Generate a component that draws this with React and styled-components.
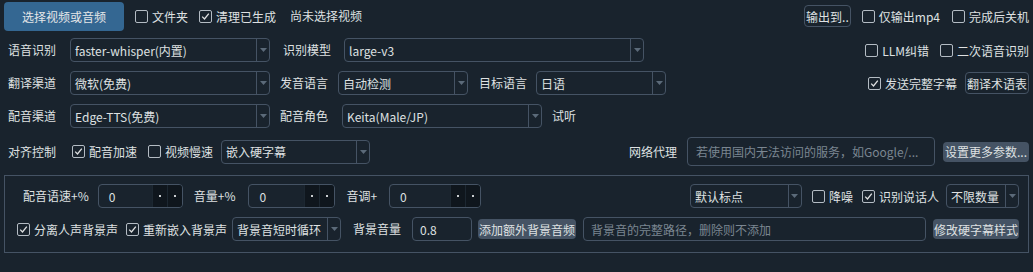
import React from 'react';
import styled, { createGlobalStyle } from 'styled-components';

const GlobalStyle = createGlobalStyle`
  html, body {
    margin: 0;
    padding: 0;
    background: #19232d;
  }
  body {
    font-family: "Noto Sans CJK SC", "Noto Sans", sans-serif;
    font-size: 12px;
    color: #dfe1e2;
  }
`;

const Page = styled.div`
  width: 1033px;
  height: 272px;
  box-sizing: border-box;
  padding: 1px 4px 0 4px;
  background: #19232d;
`;

const Row = styled.div`
  display: flex;
  align-items: center;
  height: ${({ $h }) => $h || 24}px;
  margin-top: ${({ $mt }) => $mt || 0}px;
`;

const Spacer = styled.div`
  flex: 1;
`;

const Label = styled.span`
  white-space: nowrap;
  line-height: 16px;
  margin-left: ${({ $ml }) => $ml || 0}px;
  width: ${({ $w }) => ($w ? `${$w}px` : 'auto')};
  flex-shrink: 0;
`;

const PrimaryButton = styled.button`
  width: 120px;
  height: 29px;
  border: none;
  border-radius: 4px;
  background: #346792;
  color: #e4e6e8;
  font: inherit;
  font-size: 12px;
  padding: 0;
`;

const OutlineButton = styled.button`
  height: 22px;
  padding: 0 1px;
  border: 1px solid #455364;
  border-radius: 4px;
  background: transparent;
  color: #dfe1e2;
  font: inherit;
  white-space: nowrap;
  margin-left: ${({ $ml }) => $ml || 0}px;
`;

const FillButton = styled.button`
  height: 20px;
  padding: 0 ${({ $px }) => ($px === undefined ? 2 : $px)}px;
  border: none;
  border-radius: 4px;
  background: #455364;
  color: #dfe1e2;
  font: inherit;
  white-space: nowrap;
  margin-left: ${({ $ml }) => $ml || 0}px;
  flex-shrink: 0;
`;

const CheckWrap = styled.label`
  display: flex;
  align-items: center;
  gap: 4px;
  white-space: nowrap;
  margin-left: ${({ $ml }) => $ml || 0}px;
  flex-shrink: 0;
`;

const Box = styled.span`
  width: 11px;
  height: 11px;
  border: 1px solid #b4bcc4;
  border-radius: 2px;
  display: flex;
  align-items: center;
  justify-content: center;
`;

const Check = ({ checked, children, ml }) => (
  <CheckWrap $ml={ml}>
    <Box>
      {checked && (
        <svg width="9" height="9" viewBox="0 0 9 9">
          <path d="M1.2 4.6 L3.5 7 L7.8 1.6" fill="none" stroke="#dfe1e2" strokeWidth="1.3" />
        </svg>
      )}
    </Box>
    {children}
  </CheckWrap>
);

const ComboBox = styled.div`
  width: ${({ $w }) => $w}px;
  height: 24px;
  box-sizing: border-box;
  border: 1px solid #455364;
  border-radius: 4px;
  display: flex;
  align-items: stretch;
  margin-left: ${({ $ml }) => $ml || 0}px;
  flex-shrink: 0;
`;

const ComboText = styled.div`
  flex: 1;
  padding-left: 4px;
  display: flex;
  align-items: center;
  white-space: nowrap;
  overflow: hidden;
`;

const ComboArrow = styled.div`
  width: 12px;
  border-left: 1px solid #455364;
  display: flex;
  align-items: center;
  justify-content: center;
`;

const Combo = ({ w, ml, children }) => (
  <ComboBox $w={w} $ml={ml}>
    <ComboText>{children}</ComboText>
    <ComboArrow>
      <svg width="7" height="4" viewBox="0 0 7 4">
        <path d="M0 0 H7 L3.5 4 Z" fill="#5b6a79" />
      </svg>
    </ComboArrow>
  </ComboBox>
);

const SpinBox = styled.div`
  width: ${({ $w }) => $w}px;
  height: 24px;
  box-sizing: border-box;
  border: 1px solid #455364;
  border-radius: 4px;
  display: flex;
  margin-left: ${({ $ml }) => $ml || 0}px;
  overflow: hidden;
  flex-shrink: 0;
`;

const SpinValue = styled.div`
  flex: 1;
  padding-left: 10px;
  display: flex;
  align-items: center;
`;

const SpinButton = styled.div`
  width: 14px;
  background: #0f161d;
  border-left: 1px solid #1c2731;
  display: flex;
  align-items: center;
  justify-content: center;
  &::after {
    content: '';
    width: 2px;
    height: 2px;
    background: #c9cdd0;
  }
`;

const Spin = ({ w, ml, value }) => (
  <SpinBox $w={w} $ml={ml}>
    <SpinValue>{value}</SpinValue>
    <SpinButton />
    <SpinButton />
  </SpinBox>
);

const TextInput = styled.div`
  width: ${({ $w }) => $w}px;
  height: ${({ $h }) => $h || 24}px;
  box-sizing: border-box;
  border: 1px solid #455364;
  border-radius: 4px;
  padding-left: ${({ $pl }) => $pl || 8}px;
  display: flex;
  align-items: center;
  white-space: nowrap;
  overflow: hidden;
  color: ${({ $placeholder }) => ($placeholder ? '#7b8691' : '#dfe1e2')};
  margin-left: ${({ $ml }) => $ml || 0}px;
  flex-shrink: 0;
`;

const Group = styled.div`
  margin-top: 9px;
  height: 78px;
  box-sizing: border-box;
  border: 1px solid #455364;
  padding: 8px 9px 0 12px;
`;

export default function App() {
  return (
    <>
      <GlobalStyle />
      <Page>
        <Row $h={30}>
          <PrimaryButton>选择视频或音频</PrimaryButton>
          <Check ml={11}>文件夹</Check>
          <Check checked ml={11}>清理已生成</Check>
          <Label $ml={14}>尚未选择视频</Label>
          <Spacer />
          <OutlineButton>输出到..</OutlineButton>
          <Check ml={11}>仅输出mp4</Check>
          <Check ml={12}>完成后关机</Check>
        </Row>

        <Row $mt={7}>
          <Label $ml={4} $w={62}>语音识别</Label>
          <Combo w={200}>faster-whisper(内置)</Combo>
          <Label $ml={13}>识别模型</Label>
          <Combo w={300} ml={13}>large-v3</Combo>
          <Spacer />
          <Check>LLM纠错</Check>
          <Check ml={11}>二次语音识别</Check>
        </Row>

        <Row $mt={9}>
          <Label $ml={4} $w={62}>翻译渠道</Label>
          <Combo w={200}>微软(免费)</Combo>
          <Label $ml={10}>发音语言</Label>
          <Combo w={130} ml={10}>自动检测</Combo>
          <Label $ml={11}>目标语言</Label>
          <Combo w={130} ml={9}>日语</Combo>
          <Spacer />
          <Check checked>发送完整字幕</Check>
          <OutlineButton $ml={8}>翻译术语表</OutlineButton>
        </Row>

        <Row $mt={9}>
          <Label $ml={4} $w={62}>配音渠道</Label>
          <Combo w={200}>Edge-TTS(免费)</Combo>
          <Label $ml={10}>配音角色</Label>
          <Combo w={200} ml={14}>Keita(Male/JP)</Combo>
          <Label $ml={10}>试听</Label>
        </Row>

        <Row $mt={9} $h={29}>
          <Label $ml={4}>对齐控制</Label>
          <Check checked ml={16}>配音加速</Check>
          <Check ml={11}>视频慢速</Check>
          <Combo w={149} ml={8}>嵌入硬字幕</Combo>
          <Spacer />
          <Label>网络代理</Label>
          <TextInput $w={248} $h={29} $ml={10} $placeholder>若使用国内无法访问的服务，如Google/...</TextInput>
          <FillButton $ml={8}>设置更多参数...</FillButton>
        </Row>

        <Group>
          <Row>
            <Label $ml={6}>配音语速+%</Label>
            <Spin w={85} ml={9} value="0" />
            <Label $ml={11}>音量+%</Label>
            <Spin w={87} ml={13} value="0" />
            <Label $ml={11}>音调+</Label>
            <Spin w={92} ml={12} value="0" />
            <Spacer />
            <Combo w={112}>默认标点</Combo>
            <Check ml={10}>降噪</Check>
            <Check checked ml={9}>识别说话人</Check>
            <Combo w={73} ml={7}>不限数量</Combo>
          </Row>
          <Row $mt={9}>
            <Check checked ml={0}>分离人声背景声</Check>
            <Check checked ml={8}>重新嵌入背景声</Check>
            <Combo w={109} ml={5}>背景音短时循环</Combo>
            <Label $ml={12}>背景音量</Label>
            <TextInput $w={60} $ml={11} $pl={7}>0.8</TextInput>
            <FillButton $ml={6} $px={1}>添加额外背景音频</FillButton>
            <TextInput $w={343} $ml={7} $pl={7} $placeholder>背景音的完整路径，删除则不添加</TextInput>
            <FillButton $ml={7} $px={1}>修改硬字幕样式</FillButton>
          </Row>
        </Group>
      </Page>
    </>
  );
}
